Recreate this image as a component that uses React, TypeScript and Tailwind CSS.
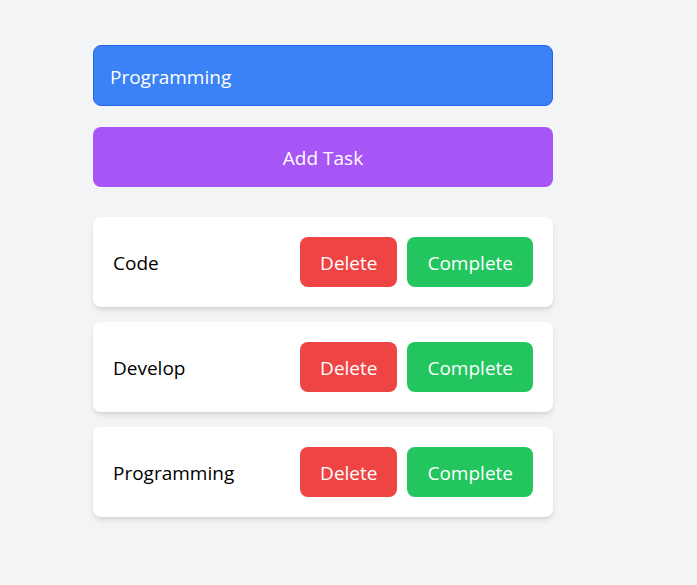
import React, { useState } from 'react';

const App: React.FC = () => {
    const [value, setValue] = useState('Programming');
    const [tasks, setTasks] = useState<string[]>(['Code', 'Develop', 'Programming']);

    const addTask = () => {
        if (!value.trim()) return;
        setTasks([...tasks, value.trim()]);
    };

    const removeTask = (idx: number) => setTasks(tasks.filter((_, i) => i !== idx));

    return (
        <div className="min-h-[585px] bg-[#f3f4f6] font-['Open_Sans','Noto_Sans',sans-serif]">
            <div className="pt-[45px] pl-[93px] w-[553px]">
                <input
                    value={value}
                    onChange={(e) => setValue(e.target.value)}
                    className="block w-full h-[61px] px-4 pt-[2px] rounded-lg border border-[#2563eb] bg-[#3b82f6] text-white text-[19px] outline-none"
                />
                <button
                    onClick={addTask}
                    className="mt-[21px] block w-full h-[60px] pt-[2px] rounded-lg bg-[#a855f7] text-white text-[19px]"
                >
                    Add Task
                </button>
                <ul className="mt-[30px] flex flex-col gap-[15px]">
                    {tasks.map((task, idx) => (
                        <li
                            key={idx}
                            className="flex items-center justify-between h-[90px] px-5 bg-white rounded-lg shadow-md"
                        >
                            <span className="text-[19px] leading-7 pt-[2px] text-black">{task}</span>
                            <div className="flex gap-[10px]">
                                <button
                                    onClick={() => removeTask(idx)}
                                    className="h-[50px] px-5 pt-[2px] rounded-lg bg-[#ef4444] text-white text-[19px]"
                                >
                                    Delete
                                </button>
                                <button
                                    onClick={() => removeTask(idx)}
                                    className="h-[50px] px-5 pt-[2px] rounded-lg bg-[#22c55e] text-white text-[19px]"
                                >
                                    Complete
                                </button>
                            </div>
                        </li>
                    ))}
                </ul>
            </div>
        </div>
    );
};

export default App;
